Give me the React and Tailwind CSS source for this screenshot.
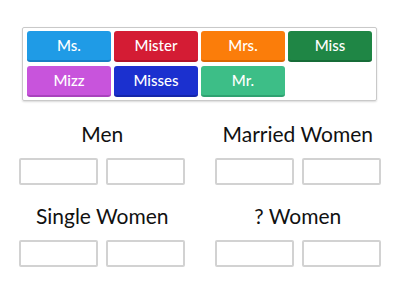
import React from 'react';

const tiles = [
    { label: 'Ms.', cls: 'bg-[#1f9be6] border-b-[#177fc4]' },
    { label: 'Mister', cls: 'bg-[#d41c34] border-b-[#b0142b]' },
    { label: 'Mrs.', cls: 'bg-[#fb7d0a] border-b-[#dc6602]' },
    { label: 'Miss', cls: 'bg-[#1f8645] border-b-[#176c38]' },
    { label: 'Mizz', cls: 'bg-[#c854dc] border-b-[#a942bd]' },
    { label: 'Misses', cls: 'bg-[#1b30cf] border-b-[#1426aa]' },
    { label: 'Mr.', cls: 'bg-[#3dbe87] border-b-[#2fa271]' },
];

const groups = ['Men', 'Married Women', 'Single Women', '? Women'];

const Group = ({ title }) => (
    <div className="flex flex-col items-center">
        <div className="h-[24px] leading-[24px] text-[21px] text-[#111] whitespace-nowrap">{title}</div>
        <div className="flex gap-[8px] mt-[12px]">
            <div className="w-[79px] h-[27px] border-2 border-[#d2d2d2] rounded-[2px] bg-white" />
            <div className="w-[79px] h-[27px] border-2 border-[#d2d2d2] rounded-[2px] bg-white" />
        </div>
    </div>
);

const App = () => {
    return (
        <div className="w-[400px] h-[300px] bg-white overflow-hidden" style={{ fontFamily: 'Lato, "Noto Sans", sans-serif' }}>
            <div className="pt-[27px] pl-[22px] pr-[23px]">
                <div className="border border-[#c9c9c9] rounded-[2px] px-[4px] py-[3px] shadow-[0_1px_2px_rgba(0,0,0,0.15)]">
                    <div className="grid grid-cols-4 gap-x-[3px] gap-y-[4px]">
                        {tiles.map((t) => (
                            <div
                                key={t.label}
                                className={`h-[31px] rounded-[3px] border-b-2 flex items-center justify-center text-white text-[15px] font-medium ${t.cls}`}
                            >
                                {t.label}
                            </div>
                        ))}
                    </div>
                </div>
            </div>
            <div className="grid grid-cols-2 gap-x-[29px] gap-y-[19px] px-[19px] mt-[21px]">
                {groups.map((g) => (
                    <Group key={g} title={g} />
                ))}
            </div>
        </div>
    );
};

export default App;
